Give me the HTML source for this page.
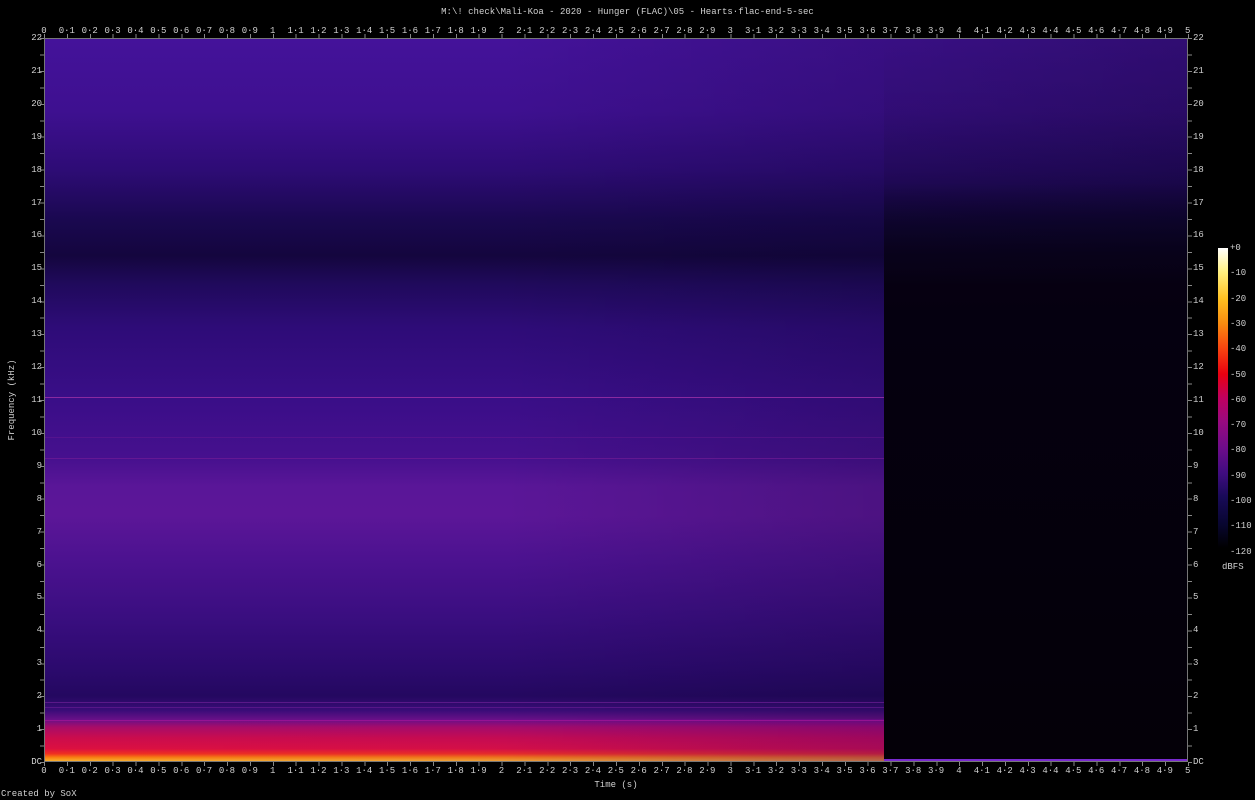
<!DOCTYPE html>
<html><head><meta charset="utf-8">
<style>
*{margin:0;padding:0;box-sizing:border-box}
body{width:1255px;height:800px;background:#000;position:relative;overflow:hidden;font-family:"Liberation Mono",monospace;font-size:9px;color:#d0d0d0}
.t{position:absolute;white-space:nowrap}
#plot{position:absolute;left:44px;top:38px;width:1144px;height:724px;border:1px solid #777;overflow:hidden;
background:linear-gradient(to bottom,#44129a 0%,#3e1090 10%,#2e0c76 18%,#1a0850 25%,#14063e 30%,#200a5c 34%,#2e0c78 40%,#3a0e88 50%,#46108e 58%,#5a1698 62%,#5c1698 66%,#4c1290 72%,#3a0e80 80%,#2c0a6e 87%,#240860 91%,#3a0c78 93%,#6a1088 94.3%,#a80c68 95.3%,#cc0c4c 96.8%,#dc1040 98.3%,#f03020 99%,#f88010 99.5%,#f8b030 100%)}
#hfade{position:absolute;left:0;top:0;width:100%;height:100%;background:linear-gradient(to right,rgba(0,0,0,0) 0%,rgba(0,0,0,0) 40%,rgba(0,0,20,0.3))}
#band{position:absolute;left:0;width:840px;bottom:0;height:42px;background:linear-gradient(to right,rgba(120,0,150,0) 0%,rgba(120,0,150,0.08) 50%,rgba(130,0,160,0.28) 100%)}
#dark{position:absolute;left:839px;top:0;right:0;height:100%;background:linear-gradient(to bottom,rgba(0,0,0,0) 0%,rgba(0,0,0,0.1) 20%,rgba(6,2,20,0.6) 27%,rgba(5,0,14,0.95) 34%,#050010 38%,#040008 100%)}
.ln{position:absolute;left:0;width:839px;height:1px}
#cb{position:absolute;left:1218px;top:248px;width:10px;height:300px;background:linear-gradient(to bottom,#ffffff 0%,#fff080 8%,#ffc020 17%,#f88c10 25%,#f84810 33%,#e80010 42%,#c00060 50%,#980a80 58%,#6c0c8a 67%,#400c80 75%,#180a58 83%,#080630 92%,#000 100%)}
.row{position:absolute;display:flex}
.row span{width:22.88px;text-align:center;display:block}
.col{position:absolute;display:flex;flex-direction:column}
.col span{height:32.909px;line-height:32.909px;display:block}
</style></head><body>
<div class="t" style="left:0;width:1255px;text-align:center;top:7px">M:\! check\Mali-Koa - 2020 - Hunger (FLAC)\05 - Hearts·flac-end-5-sec</div>
<div class="row" style="left:32.56px;top:26px"><span>0</span><span>0·1</span><span>0·2</span><span>0·3</span><span>0·4</span><span>0·5</span><span>0·6</span><span>0·7</span><span>0·8</span><span>0·9</span><span>1</span><span>1·1</span><span>1·2</span><span>1·3</span><span>1·4</span><span>1·5</span><span>1·6</span><span>1·7</span><span>1·8</span><span>1·9</span><span>2</span><span>2·1</span><span>2·2</span><span>2·3</span><span>2·4</span><span>2·5</span><span>2·6</span><span>2·7</span><span>2·8</span><span>2·9</span><span>3</span><span>3·1</span><span>3·2</span><span>3·3</span><span>3·4</span><span>3·5</span><span>3·6</span><span>3·7</span><span>3·8</span><span>3·9</span><span>4</span><span>4·1</span><span>4·2</span><span>4·3</span><span>4·4</span><span>4·5</span><span>4·6</span><span>4·7</span><span>4·8</span><span>4·9</span><span>5</span></div>
<div class="row" style="left:32.56px;top:766px"><span>0</span><span>0·1</span><span>0·2</span><span>0·3</span><span>0·4</span><span>0·5</span><span>0·6</span><span>0·7</span><span>0·8</span><span>0·9</span><span>1</span><span>1·1</span><span>1·2</span><span>1·3</span><span>1·4</span><span>1·5</span><span>1·6</span><span>1·7</span><span>1·8</span><span>1·9</span><span>2</span><span>2·1</span><span>2·2</span><span>2·3</span><span>2·4</span><span>2·5</span><span>2·6</span><span>2·7</span><span>2·8</span><span>2·9</span><span>3</span><span>3·1</span><span>3·2</span><span>3·3</span><span>3·4</span><span>3·5</span><span>3·6</span><span>3·7</span><span>3·8</span><span>3·9</span><span>4</span><span>4·1</span><span>4·2</span><span>4·3</span><span>4·4</span><span>4·5</span><span>4·6</span><span>4·7</span><span>4·8</span><span>4·9</span><span>5</span></div>
<div class="col" style="left:20px;width:22px;text-align:right;top:22px"><span>22</span><span>21</span><span>20</span><span>19</span><span>18</span><span>17</span><span>16</span><span>15</span><span>14</span><span>13</span><span>12</span><span>11</span><span>10</span><span>9</span><span>8</span><span>7</span><span>6</span><span>5</span><span>4</span><span>3</span><span>2</span><span>1</span><span>DC</span></div>
<div class="col" style="left:1193px;top:22px"><span>22</span><span>21</span><span>20</span><span>19</span><span>18</span><span>17</span><span>16</span><span>15</span><span>14</span><span>13</span><span>12</span><span>11</span><span>10</span><span>9</span><span>8</span><span>7</span><span>6</span><span>5</span><span>4</span><span>3</span><span>2</span><span>1</span><span>DC</span></div>
<div style="position:absolute;left:44px;top:34px;width:1146px;height:4px;background:repeating-linear-gradient(to right,#888 0 1px,transparent 1px 22.88px)"></div>
<div style="position:absolute;left:44px;top:762px;width:1146px;height:4px;background:repeating-linear-gradient(to right,#888 0 1px,transparent 1px 22.88px)"></div>
<div style="position:absolute;left:40px;top:38px;width:4px;height:725px;background:repeating-linear-gradient(to bottom,#888 0 1px,transparent 1px 16.4545px)"></div>
<div style="position:absolute;left:1188px;top:38px;width:4px;height:725px;background:repeating-linear-gradient(to bottom,#888 0 1px,transparent 1px 16.4545px)"></div>
<div id="plot">
<div id="hfade"></div>
<div id="band"></div>
<div id="dark"></div>
<div class="ln" style="top:358px;background:#8a2aa0"></div>
<div class="ln" style="top:419px;background:rgba(120,30,150,0.6)"></div>
<div class="ln" style="top:398px;background:rgba(120,30,150,0.35)"></div>
<div class="ln" style="top:663px;background:rgba(110,30,150,0.7)"></div>
<div class="ln" style="top:668px;background:rgba(110,30,150,0.6)"></div>
<div class="ln" style="top:681px;background:rgba(160,20,150,0.8)"></div>
<div style="position:absolute;left:839px;right:0;bottom:0;height:2px;background:#7a2ad0"></div>
</div>
<div id="cb"></div>
<div class="t" style="left:1230px;top:243px">+0</div>
<div class="t" style="left:1230px;top:268px">-10</div>
<div class="t" style="left:1230px;top:294px">-20</div>
<div class="t" style="left:1230px;top:319px">-30</div>
<div class="t" style="left:1230px;top:344px">-40</div>
<div class="t" style="left:1230px;top:370px">-50</div>
<div class="t" style="left:1230px;top:395px">-60</div>
<div class="t" style="left:1230px;top:420px">-70</div>
<div class="t" style="left:1230px;top:445px">-80</div>
<div class="t" style="left:1230px;top:471px">-90</div>
<div class="t" style="left:1230px;top:496px">-100</div>
<div class="t" style="left:1230px;top:521px">-110</div>
<div class="t" style="left:1230px;top:547px">-120</div>
<div class="t" style="left:1222px;top:562px">dBFS</div>
<div class="t" style="left:0;width:1232px;text-align:center;top:780px">Time (s)</div>
<div class="t" style="left:12px;top:400px;transform:translate(-50%,-50%) rotate(-90deg)">Frequency (kHz)</div>
<div class="t" style="left:1px;top:789px">Created by SoX</div>
</body></html>
